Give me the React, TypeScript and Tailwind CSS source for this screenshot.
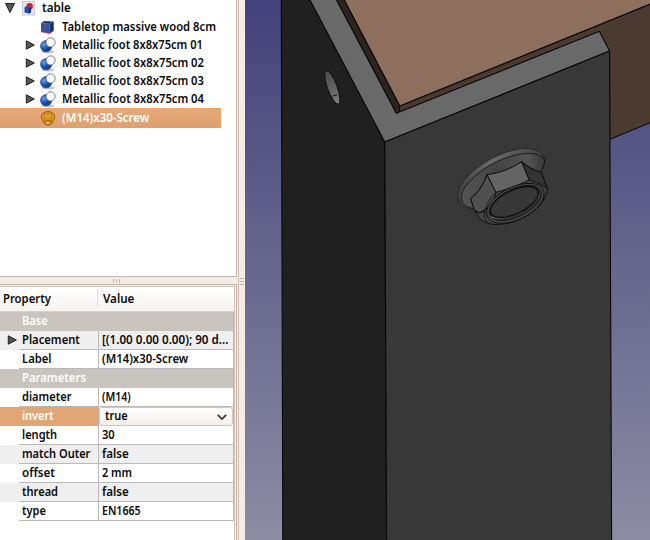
import { useLayoutEffect, useRef, type ReactNode } from "react";

// A label condensed horizontally to a given width.
function Fit({ w, children }: { w: number; children: string }) {
  const ref = useRef<HTMLSpanElement>(null);
  useLayoutEffect(() => {
    const el = ref.current;
    if (el) el.style.transform = `scaleX(${w / el.offsetWidth})`;
  }, [w, children]);
  return (
    <span className="block shrink-0 overflow-visible" style={{ width: w }}>
      <span ref={ref} className="inline-block origin-left whitespace-nowrap">
        {children}
      </span>
    </span>
  );
}

function Arrow({ open = false }: { open?: boolean }) {
  return (
    <svg width="12" height="12" viewBox="0 0 12 12" className="shrink-0">
      <path
        d={open ? "M1.5 1.5H10.5L6 10.5Z" : "M2.3 1.8L10.3 6L2.3 10.2Z"}
        fill="#555"
        stroke="#222"
        strokeWidth="1"
        strokeLinejoin="round"
      />
    </svg>
  );
}

function DocIcon() {
  return (
    <svg width="14" height="16" viewBox="0 0 14 16" className="shrink-0">
      <path d="M.5 1.5H12.5V15H.5Z" fill="#e6e6ec" stroke="#c6c6ce" />
      <circle cx="7.6" cy="6.4" r="3.3" fill="#cf2430" />
      <path d="M2.5 7.2L4.5 6.2L8.8 7.4V12.8L6.8 13.4L2.5 12.5Z" fill="#2b48ac" />
      <path d="M6.8 8.4L8.8 7.4V12.8L6.8 13.4Z" fill="#183078" />
    </svg>
  );
}

function CubeIcon() {
  return (
    <svg width="15" height="16" viewBox="0 0 15 16" className="shrink-0">
      <path d="M1 4L9.5 5V14.5L1 12.6Z" fill="#2556a6" />
      <path d="M1 4L4.5 1.9L13.5 2.6L9.5 5Z" fill="#193a78" />
      <path d="M9.5 5L13.5 2.6V11.8L9.5 14.5Z" fill="#142f66" />
      <path d="M1 12.6L9.5 14.5L13.5 11.8M13.5 2.8V11.8M9.6 5V14.4M5 4.6V11" fill="none" stroke="#c8324c" strokeWidth=".9" />
    </svg>
  );
}

function CutIcon() {
  return (
    <svg width="17" height="17" viewBox="0 0 17 17" className="shrink-0">
      <ellipse cx="8" cy="14.9" rx="6.5" ry="1.5" fill="#999" opacity=".6" />
      <circle cx="6.2" cy="9.2" r="5.7" fill="url(#ball)" stroke="#1b4794" strokeWidth=".6" />
      <circle cx="10.6" cy="5.4" r="4.6" fill="#fcfcff" stroke="#55618c" strokeWidth=".8" />
    </svg>
  );
}

function ScrewIcon() {
  return (
    <svg width="16" height="16" viewBox="0 0 16 16" className="shrink-0">
      <path d="M3.4 8.5V12.4L6 14.8H10L12.6 12.4V8.5Z" fill="#d98c18" stroke="#86530c" strokeWidth=".9" />
      <ellipse cx="8" cy="7" rx="6.7" ry="5.7" fill="#e39a22" stroke="#95600f" strokeWidth=".9" />
      <path d="M4.3 3.2L8 1.8L11.7 3.2V6.8Q8 9.8 4.3 6.8Z" fill="#f2b63c" stroke="#a4690f" strokeWidth=".8" />
      <ellipse cx="8" cy="4.2" rx="2.8" ry="1.5" fill="#d58b15" />
      <path d="M3.8 9.2Q8 12.8 12.2 9.2" fill="none" stroke="#925b0c" strokeWidth=".9" />
      <ellipse cx="8" cy="12.9" rx="2.6" ry="1" fill="#f2b63c" />
    </svg>
  );
}

function TreeItem({ label, w, expandable, icon }: { label: string; w: number; expandable?: boolean; icon: ReactNode }) {
  return (
    <div className="flex h-[18px] items-center pl-6">
      <div className="flex w-4 shrink-0">{expandable && <Arrow />}</div>
      <div className="flex w-[22px] shrink-0">{icon}</div>
      <Fit w={w}>{label}</Fit>
    </div>
  );
}

function Tree() {
  return (
    <div className="h-[277px] w-[237px] shrink-0 border-r border-b border-[#c7b8a9] bg-white">
      <div className="flex h-[18px] items-center pb-[2px] pl-1">
        <div className="flex w-[18px]"><Arrow open /></div>
        <div className="flex w-5"><DocIcon /></div>
        <Fit w={29}>table</Fit>
      </div>
      <TreeItem label="Tabletop massive wood 8cm" w={154} icon={<CubeIcon />} />
      <TreeItem label="Metallic foot 8x8x75cm 01" w={141} expandable icon={<CutIcon />} />
      <TreeItem label="Metallic foot 8x8x75cm 02" w={142} expandable icon={<CutIcon />} />
      <TreeItem label="Metallic foot 8x8x75cm 03" w={142} expandable icon={<CutIcon />} />
      <TreeItem label="Metallic foot 8x8x75cm 04" w={142} expandable icon={<CutIcon />} />
      <div className="flex h-5 w-[221px] items-center bg-linear-to-b from-[#e5a877] to-[#dfa06f] pl-10 text-white">
        <div className="flex w-[22px]"><ScrewIcon /></div>
        <Fit w={87}>(M14)x30-Screw</Fit>
      </div>
    </div>
  );
}

type Prop = { name: string; nw: number; value: string; vw: number; alt?: boolean; arrow?: boolean };

function Group({ name, w }: { name: string; w: number }) {
  return (
    <div className="flex h-[19px] items-center bg-[#c9c4bd] pb-px pl-[22px] text-white">
      <Fit w={w}>{name}</Fit>
    </div>
  );
}

function PropRow({ name, nw, value, vw, alt, arrow }: Prop) {
  return (
    <div className={`flex h-[19px] ${alt ? "bg-[#efefef]" : "bg-white"}`}>
      <div className="flex w-[19px] shrink-0 items-center pb-px pl-[6px]">{arrow && <Arrow />}</div>
      <div className="flex w-20 shrink-0 items-center border-r border-b border-[#b9b9b9] pl-[3px]">
        <Fit w={nw}>{name}</Fit>
      </div>
      <div className="flex grow items-center border-b border-[#b9b9b9] pl-[3px]">
        <Fit w={vw}>{value}</Fit>
      </div>
    </div>
  );
}

const parameters: Prop[] = [
  { name: "length", nw: 35, value: "30", vw: 13 },
  { name: "match Outer", nw: 68, value: "false", vw: 27, alt: true },
  { name: "offset", nw: 33, value: "2 mm", vw: 30 },
  { name: "thread", nw: 36, value: "false", vw: 27, alt: true },
  { name: "type", nw: 24, value: "EN1665", vw: 39 },
];

function Properties() {
  return (
    <div className="h-[256px] w-[237px] grow border-t border-r border-[#c7b3a5] bg-[#f4eee8] pt-px pr-px">
      <div className="h-full border-t border-r border-[#d2c5b8] bg-white">
        <div className="flex h-[25px] w-[234px] border-b border-[#d8d2cb] bg-linear-to-b from-white to-[#f6f3f1]">
          <div className="mt-[3px] mb-1 flex w-[98px] items-center border-r border-[#e2dcd8] pl-[3px]">
            <Fit w={48}>Property</Fit>
          </div>
          <div className="flex items-center pb-px pl-[5px]"><Fit w={31}>Value</Fit></div>
        </div>
        <div className="w-[234px] border-r border-[#bcb8b3]">
          <Group name="Base" w={26} />
          <PropRow name="Placement" nw={58} value="[(1.00 0.00 0.00); 90 d..." vw={126} alt arrow />
          <PropRow name="Label" nw={30} value="(M14)x30-Screw" vw={86} />
          <Group name="Parameters" w={64} />
          <PropRow name="diameter" nw={50} value="(M14)" vw={29} />
          <div className="flex h-[19px]">
            <div className="flex w-[99px] shrink-0 items-center border-r border-[#b9b9b9] bg-[#e2a574] pb-px pl-[22px] text-white">
              <Fit w={32}>invert</Fit>
            </div>
            <div className="flex grow items-center justify-between rounded-[3px] border border-[#d1c7bf] bg-linear-to-b from-white to-[#f2eeea] pr-[5px] pl-[5px]">
              <div className="pb-px"><Fit w={23}>true</Fit></div>
              <svg width="10" height="8" viewBox="0 0 10 8">
                <path d="M.8 1.8L5 6L9.2 1.8" fill="none" stroke="#38332f" strokeWidth="1.7" />
              </svg>
            </div>
          </div>
          {parameters.map((p) => <PropRow key={p.name} {...p} />)}
        </div>
      </div>
    </div>
  );
}

function Screw() {
  return (
    <g transform="translate(440 130) scale(.33333)" stroke="#0c0c0c" strokeWidth="3" strokeLinejoin="round">
      <path d="M100 239C60 233 40 205 62 167C89 116 178 63 245 56C291 52 318 70 314 99Q311 117 300 126L180 190Z" fill="url(#flange)" stroke="#191919" strokeWidth="2" />
      <path d="M102 236C64 232 52 200 79 166C115 119 185 79 245 72C291 66 318 79 313 101Q309 119 297 129" fill="url(#flangeFace)" strokeWidth="2.5" />
      <path d="M92 205Q123 184 141 134L168 187L245 95Q268 116 304 128L322 176C319 222 259 276 180 283C137 287 115 267 105 241Z" fill="#454545" />
      <path d="M92 205Q123 184 141 134L168 187Q161 228 118 249L103 241Z" fill="#505050" />
      <path d="M141 134Q198 127 245 95L268 150Q217 177 168 187Z" fill="#646464" />
      <path d="M245 95Q268 116 304 128L322 176Q302 160 268 150Z" fill="#333" />
      <path d="M168 187Q141 213 134 244Q117 252 105 241M134 244Q129 264 143 277" fill="none" strokeWidth="2.5" />
      <ellipse cx="226" cy="220" rx="93" ry="49" transform="rotate(-26 226 220)" fill="#484848" strokeWidth="2.5" />
      <ellipse cx="226" cy="219" rx="85" ry="42" transform="rotate(-26 226 219)" fill="#303030" stroke="#171717" strokeWidth="2.5" />
      <path d="M152 260C186 277 268 245 298 196" fill="none" stroke="#747474" strokeWidth="3" />
      <ellipse cx="223" cy="216" rx="78" ry="35" transform="rotate(-26 223 216)" fill="#373737" strokeWidth="4" />
    </g>
  );
}

function Viewport() {
  return (
    <svg width="405" height="540" viewBox="245 0 405 540" className="block shrink-0">
      <defs>
        <linearGradient id="sky" x1="0" y1="0" x2="0" y2="1">
          <stop stopColor="#42427a" /><stop offset="1" stopColor="#8c8ca3" />
        </linearGradient>
        <radialGradient id="ball" cx="30%" cy="35%">
          <stop stopColor="#6ea3e6" /><stop offset=".55" stopColor="#2c66c2" /><stop offset="1" stopColor="#174494" />
        </radialGradient>
        <linearGradient id="flange">
          <stop stopColor="#404040" /><stop offset=".4" stopColor="#6b6b6b" /><stop offset="1" stopColor="#404040" />
        </linearGradient>
        <linearGradient id="flangeFace">
          <stop stopColor="#555" /><stop offset=".45" stopColor="#434343" /><stop offset=".8" stopColor="#555" /><stop offset="1" stopColor="#363636" />
        </linearGradient>
        <linearGradient id="hole" x1="0" y1="0" x2="0" y2="1">
          <stop stopColor="#484848" /><stop offset="1" stopColor="#7c7c7c" />
        </linearGradient>
      </defs>
      <rect x="245" width="405" height="540" fill="url(#sky)" />
      <g stroke="#080808" strokeWidth="1.1" strokeLinejoin="round">
        <path d="M399.7 106L655 2V120.7L610 139.3L396.3 113.3Z" fill="#4a3a30" />
        <path d="M343.7 -1H655V2L399.7 106Z" fill="#8e6e5d" />
        <path d="M336 -1H343.7L399.7 106V112L396.3 113.3Z" fill="#2d241e" />
        <path d="M281.3 -1H309.7L384.8 142L386.6 541H282.8Z" fill="#202020" />
        <path d="M309.5 -1H336L396.3 113.3L599.3 31.3L609.6 51L384.8 142Z" fill="#696969" />
        <path d="M384.8 142L609.6 51L611.6 541H386.6Z" fill="#383838" />
        <ellipse cx="332.3" cy="87.4" rx="4.8" ry="17.7" transform="rotate(-20 332.3 87.4)" fill="url(#hole)" strokeWidth=".8" />
        <path d="M332.5 96.2L337.3 94.6" strokeWidth=".9" />
      </g>
      <Screw />
    </svg>
  );
}

export default function App() {
  return (
    <main className="flex h-[540px] w-[650px] overflow-hidden bg-[#f4ece7] font-['Noto_Sans','Open_Sans',sans-serif] text-[12px] leading-[18px] font-semibold text-[#0a0a0a]">
      <section className="flex h-full w-[239px] shrink-0 flex-col border-r border-[#d1c0b0]">
        <Tree />
        <div className="flex h-[7px] shrink-0 items-center justify-center gap-[2px] pr-[6px]">
          <i className="h-1 w-px bg-[#c5b7ad]" /><i className="h-1 w-px bg-[#c5b7ad]" /><i className="h-1 w-px bg-[#c5b7ad]" />
        </div>
        <Properties />
      </section>
      <div className="flex w-[6px] shrink-0 flex-col items-center justify-center gap-[2px] pt-[22px]">
        <i className="h-px w-1 bg-[#c5b7ad]" /><i className="h-px w-1 bg-[#c5b7ad]" /><i className="h-px w-1 bg-[#c5b7ad]" />
      </div>
      <Viewport />
    </main>
  );
}
